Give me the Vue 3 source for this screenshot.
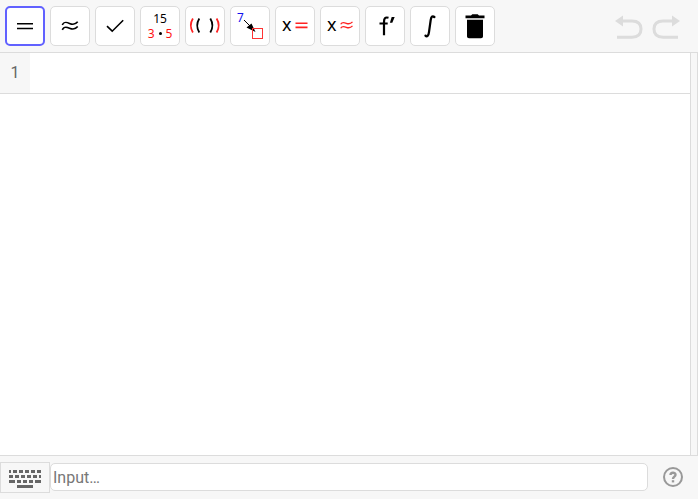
<script setup>
import { ref } from 'vue'

const active = ref('evaluate')
const entry = ref('')
const tools = [
  { id: 'evaluate', label: 'Evaluate' },
  { id: 'numeric', label: 'Numeric' },
  { id: 'keep', label: 'Keep input' },
  { id: 'factor', label: 'Factor' },
  { id: 'expand', label: 'Expand' },
  { id: 'substitute', label: 'Substitute' },
  { id: 'solve', label: 'Solve' },
  { id: 'nsolve', label: 'Solve numerically' },
  { id: 'derivative', label: 'Derivative' },
  { id: 'integral', label: 'Integral' },
  { id: 'delete', label: 'Delete' }
]
</script>

<template>
  <div class="app">
    <header class="toolbar">
      <div class="tools">
        <button
          v-for="tool in tools"
          :key="tool.id"
          type="button"
          class="tool"
          :class="{ active: active === tool.id }"
          :aria-label="tool.label"
          @click="active = tool.id"
        >
          <svg v-if="tool.id === 'evaluate'" class="icon" viewBox="0 0 36 36">
            <path d="M10 15.7H26M10 20.5H26" class="line" />
          </svg>
          <svg v-else-if="tool.id === 'numeric'" class="icon" viewBox="0 0 36 36">
            <path d="M10.3 17C12 13.3 14.5 14.1 17.5 15.4S23.5 16.5 25.7 13.8M10.3 21.8C12 18.1 14.5 18.9 17.5 20.2S23.5 21.3 25.7 18.6" class="line" />
          </svg>
          <svg v-else-if="tool.id === 'keep'" class="icon" viewBox="0 0 36 36">
            <path d="M10 18.2L15.2 23.2L26.2 12.2" class="line" />
          </svg>
          <span v-else-if="tool.id === 'factor'" class="stack">
            <span>15</span>
            <span class="product"><span>3</span><i class="dot"></i><span>5</span></span>
          </span>
          <svg v-else-if="tool.id === 'expand'" class="icon" viewBox="0 0 36 36">
            <path d="M5.9 10.5Q1.7 17.5 5.9 24.5M29.6 10.5Q33.8 17.5 29.6 24.5" class="line paren stroke-red" />
            <path d="M12.3 10.5Q8.1 17.5 12.3 24.5M23.3 10.5Q27.5 17.5 23.3 24.5" class="line paren" />
          </svg>
          <svg v-else-if="tool.id === 'substitute'" class="icon" viewBox="0 0 36 36">
            <text x="5" y="14" class="seven">7</text>
            <path d="M12 12L20 20" class="thin" />
            <path d="M23.5 24L14.5 19.5L19.5 15.5Z" />
            <rect x="20.5" y="20.5" width="10" height="10" class="box" />
          </svg>
          <svg v-else-if="tool.id === 'solve'" class="icon" viewBox="0 0 36 36">
            <text x="5" y="23" class="variable">x</text>
            <path d="M18.5 15.2H30.5M18.5 19.4H30.5" class="line stroke-red" />
          </svg>
          <svg v-else-if="tool.id === 'nsolve'" class="icon" viewBox="0 0 36 36">
            <text x="5" y="23" class="variable">x</text>
            <path d="M18.7 16.3C20 13.8 22 14.4 24.3 15.3S28.5 16.1 30.5 13.9M18.7 20.3C20 17.8 22 18.4 24.3 19.3S28.5 20.1 30.5 17.9" class="line narrow stroke-red" />
          </svg>
          <svg v-else-if="tool.id === 'derivative'" class="icon" viewBox="0 0 36 36">
            <path d="M21.5 9.8C18 8.8 17 10.5 17 14V27.3M12.5 15.5H20.7" class="line heavy" />
            <path d="M24.7 9H27.7L25.3 14.7H22.9Z" />
          </svg>
          <svg v-else-if="tool.id === 'integral'" class="icon" viewBox="0 0 36 36">
            <path d="M22.3 9.2C20.4 7.2 19.2 8.8 18.7 12L17 24C16.5 28.3 15 29 13.3 27.8" class="line heavy" />
            <circle cx="22.3" cy="9" r="1.2" />
            <circle cx="13.6" cy="27.6" r="1.2" />
          </svg>
          <svg v-else class="icon" viewBox="0 0 36 36">
            <path d="M8.5 7.5H14L15.3 6.3H20.7L22 7.5H27.5V10.2H8.5ZM10 11.8H26V28.5Q26 30.3 24 30.3H12Q10 30.3 10 28.5Z" />
          </svg>
        </button>
      </div>
      <div class="history">
        <button type="button" class="plain" aria-label="Undo">
          <svg class="history-icon" viewBox="0 0 28 26">
            <path d="M6 8H17Q26 8 26 16T17 24.3H2" />
            <path d="M8 2.5V13.5L0 8Z" class="head" />
          </svg>
        </button>
        <button type="button" class="plain" aria-label="Redo">
          <svg class="history-icon" viewBox="0 0 28 26">
            <path d="M22 8H11Q2 8 2 16T11 24.3H26" />
            <path d="M20 2.5V13.5L28 8Z" class="head" />
          </svg>
        </button>
      </div>
    </header>

    <main class="workspace">
      <div class="sheet">
        <div class="row">
          <span class="number">1</span>
          <div class="cell"></div>
        </div>
      </div>
      <div class="gutter"></div>
    </main>

    <footer class="entry-bar">
      <button type="button" class="keyboard" aria-label="Keyboard">
        <svg class="keyboard-icon" viewBox="0 0 34 20">
          <path d="M1 3.5H33" stroke-dasharray="2 2 4 2 4 2 4 2 4 2 4 9" />
          <path d="M1 8.5H33" stroke-dasharray="4 2 4 2 4 2 4 2 4 2 2 9" />
          <path d="M1 13.5H33" stroke-dasharray="6 2 4 2 4 2 4 2 6 9" />
          <path d="M9 18.5H25" />
        </svg>
      </button>
      <input v-model="entry" class="entry" type="text" placeholder="Input…" aria-label="Input" />
      <button type="button" class="plain help" aria-label="Help">
        <svg class="help-icon" viewBox="0 0 20 20">
          <circle cx="10" cy="10" r="9" />
          <path d="M7.5 8C7.5 5 12.5 5 12.5 7.8C12.5 9.7 10 9.7 10 12" class="mark" />
          <path d="M10 13.2V15.4" class="mark" />
        </svg>
      </button>
    </footer>
  </div>
</template>

<style>
body {
  margin: 0;
  background: #fff;
}
</style>

<style scoped>
.app {
  box-sizing: border-box;
  display: flex;
  flex-direction: column;
  height: 100vh;
  padding: 0 2px 1px 0;
  font-family: Roboto, "Noto Sans", sans-serif;
  color: #000;
}
.toolbar {
  display: flex;
  justify-content: space-between;
  align-items: center;
  padding: 6px 18px 6px 5px;
  background: #f7f7f7;
  border-bottom: 1px solid #dcdcdc;
}
.tools {
  display: flex;
  gap: 5px;
}
button {
  font-family: inherit;
  cursor: pointer;
}
.tool {
  box-sizing: border-box;
  display: flex;
  align-items: center;
  justify-content: center;
  width: 40px;
  height: 40px;
  padding: 0;
  border: 1px solid #dcdcdc;
  border-radius: 5px;
  background: #fff;
  color: #000;
}
.tool.active {
  border: 2px solid #6161ff;
}
.icon {
  flex: none;
  width: 36px;
  height: 36px;
}
.line {
  fill: none;
  stroke: #000;
  stroke-width: 1.6;
}
.narrow {
  stroke-width: 1.3;
}
.paren {
  stroke-width: 1.8;
}
.heavy {
  stroke-width: 2.2;
}
.stroke-red {
  stroke: #f22;
}
.thin {
  stroke: #000;
  stroke-width: 1;
}
.box {
  fill: none;
  stroke: #f33;
  stroke-width: 1;
}
.seven {
  font-size: 12px;
  fill: #11e;
}
.variable {
  font-family: "Noto Sans", sans-serif;
  font-size: 18px;
}
.stack {
  display: flex;
  flex-direction: column;
  align-items: center;
  font-family: "Noto Sans", sans-serif;
  font-size: 12px;
  line-height: 15px;
}
.product {
  display: flex;
  align-items: center;
  gap: 4px;
  color: #f11;
}
.dot {
  width: 3px;
  height: 3px;
  border-radius: 50%;
  background: #000;
}
.history {
  display: flex;
  gap: 9px;
}
.plain {
  display: flex;
  padding: 0;
  border: 0;
  background: none;
}
.history-icon {
  width: 28px;
  height: 26px;
  fill: none;
  stroke: #dcdcdc;
  stroke-width: 3;
}
.head {
  fill: #dcdcdc;
  stroke: none;
}
.workspace {
  display: flex;
  flex: 1;
  border-right: 1px solid #dcdcdc;
}
.sheet {
  flex: 1;
  background: #fff;
}
.row {
  display: flex;
  height: 40px;
  border-bottom: 1px solid #dcdcdc;
}
.number {
  width: 30px;
  background: #f7f7f7;
  color: #666;
  font-size: 16px;
  line-height: 40px;
  text-align: center;
}
.cell {
  flex: 1;
}
.gutter {
  width: 6px;
  border-left: 1px solid #dcdcdc;
  background: #f7f7f7;
}
.entry-bar {
  display: flex;
  align-items: flex-start;
  padding: 6px 15px 6px 0;
  border-top: 1px solid #dcdcdc;
  background: #f7f7f7;
}
.keyboard {
  box-sizing: border-box;
  display: flex;
  align-items: center;
  justify-content: center;
  width: 50px;
  height: 31px;
  padding: 0;
  border: 1px solid #dcdcdc;
  background: #f7f7f7;
}
.keyboard-icon {
  width: 34px;
  height: 20px;
  stroke: #666;
  stroke-width: 3;
}
.entry {
  box-sizing: border-box;
  flex: 1;
  min-width: 0;
  height: 28px;
  margin-top: 1px;
  padding: 0 2px;
  border: 1px solid #dcdcdc;
  border-radius: 5px;
  background: #fff;
  font-family: inherit;
  font-size: 16px;
}
.entry::placeholder {
  color: #777;
}
.help {
  margin-top: 5px;
  margin-left: 15px;
}
.help-icon {
  width: 20px;
  height: 20px;
  fill: none;
  stroke: #999;
  stroke-width: 2;
}
.mark {
  stroke-width: 2.4;
}
</style>
